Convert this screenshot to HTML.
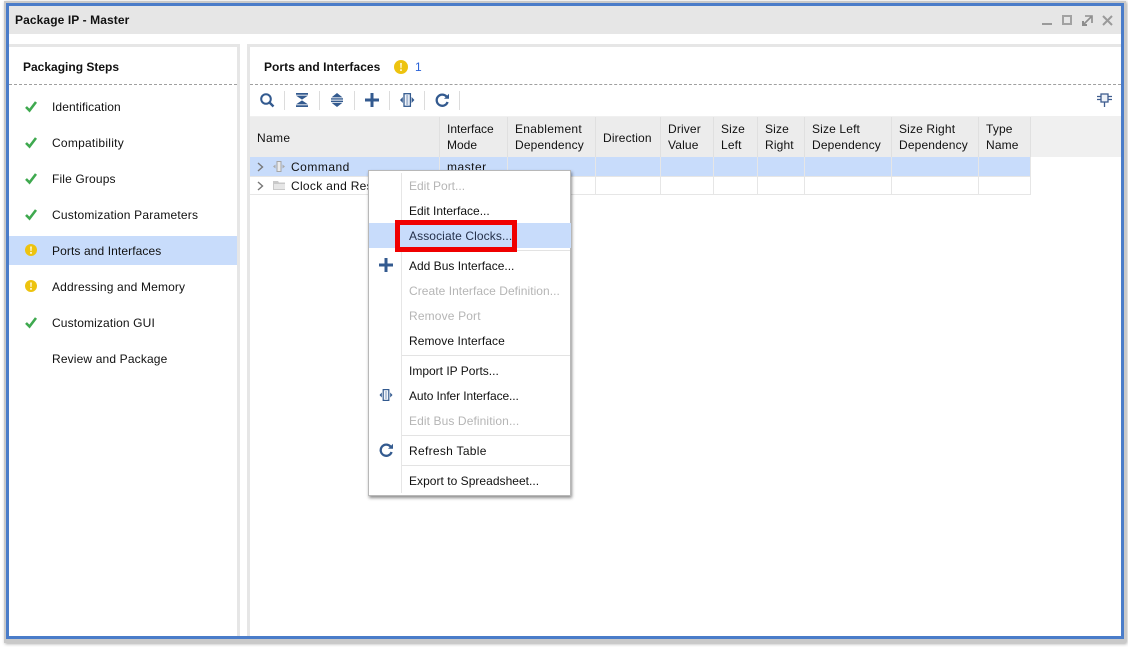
<!DOCTYPE html>
<html><head><meta charset="utf-8"><style>
html,body{margin:0;padding:0;background:#fff}
body{width:1128px;height:647px;position:relative;overflow:hidden;font:12px/16px "Liberation Sans",sans-serif;color:#111}
.a{position:absolute}
.t{position:absolute;white-space:nowrap;letter-spacing:.15px}
.b{font-weight:bold}
.d{color:#b5b5b5}
.m{letter-spacing:.03px}
svg{position:absolute;overflow:visible}
.h{position:absolute;top:117px;height:40px;background:#ececec;border-right:1px solid #e0e0e0;box-sizing:border-box}
.v{position:absolute;top:157px;height:38px;width:1px;background:#e6e6e6}
.s{position:absolute;left:402px;width:168px;height:1px;background:#e3e3e3}
.ts{position:absolute;top:91px;width:1px;height:19px;background:#dcdcdc}
</style></head><body>
<div class="a" style="left:4px;top:1px;width:1122px;height:642px;background:#c9c9c9;box-shadow:1px 1px 3px #aaa"></div>
<div class="a" style="left:6px;top:3px;width:1118px;height:636px;background:#4a7cc9"></div>
<div class="a" style="left:9px;top:6px;width:1112px;height:630px;background:#fff"></div>
<div class="a" style="left:9px;top:6px;width:1112px;height:28px;background:#e6e6e6"></div>
<div class="t b" style="left:15px;top:12px;letter-spacing:.1px">Package IP - Master</div>
<div class="a" style="left:1042px;top:23px;width:10px;height:2px;background:#9a9a9a"></div>
<div class="a" style="left:1062px;top:15px;width:10px;height:10px;border:2px solid #a2a2a2;box-sizing:border-box"></div>
<svg style="left:1082px;top:15px" width="11" height="11" fill="none" stroke="#8d8d8d" stroke-width="1.6"><path d="M3 1H10V8M9 2L1 10"/><path d="M1 6V10H5" stroke-width="2"/></svg>
<svg style="left:1102px;top:15px" width="11" height="11" fill="none" stroke="#9a9a9a" stroke-width="2"><path d="M1 1L10 10M10 1L1 10"/></svg>

<div class="a" style="left:9px;top:44px;width:1112px;height:3px;background:#e6e6e6"></div>
<div class="a" style="left:237px;top:44px;width:3px;height:592px;background:#e6e6e6"></div>
<div class="a" style="left:240px;top:44px;width:7px;height:592px;background:#fff"></div>
<div class="a" style="left:247px;top:44px;width:3px;height:592px;background:#e6e6e6"></div>

<div class="t b" style="left:23px;top:59px;letter-spacing:0">Packaging Steps</div>
<div class="a" style="left:9px;top:84px;width:228px;border-top:1px dashed #a0a0a0"></div>
<div class="a" style="left:250px;top:84px;width:871px;border-top:1px dashed #a0a0a0"></div>
<div class="a" style="left:9px;top:236px;width:228px;height:29px;background:#c8dcfb"></div>

<svg style="left:25px;top:101px" width="12" height="11" fill="none" stroke="#3fa94f" stroke-width="2.6"><path d="M1 6L4.5 9.5L11 1"/></svg>
<div class="t" style="left:52px;top:99px;letter-spacing:.1px">Identification</div>
<svg style="left:25px;top:137px" width="12" height="11" fill="none" stroke="#3fa94f" stroke-width="2.6"><path d="M1 6L4.5 9.5L11 1"/></svg>
<div class="t" style="left:52px;top:135px;letter-spacing:.25px">Compatibility</div>
<svg style="left:25px;top:173px" width="12" height="11" fill="none" stroke="#3fa94f" stroke-width="2.6"><path d="M1 6L4.5 9.5L11 1"/></svg>
<div class="t" style="left:52px;top:171px">File Groups</div>
<svg style="left:25px;top:209px" width="12" height="11" fill="none" stroke="#3fa94f" stroke-width="2.6"><path d="M1 6L4.5 9.5L11 1"/></svg>
<div class="t" style="left:52px;top:207px;letter-spacing:.2px">Customization Parameters</div>
<svg style="left:25px;top:244px" width="12" height="12"><circle cx="6" cy="6" r="6" fill="#edc30f"/><path d="M5 2.5H7L6.6 7H5.4ZM5 8H7V9.8H5Z" fill="#fff3c0"/></svg>
<div class="t" style="left:52px;top:243px;letter-spacing:.1px">Ports and Interfaces</div>
<svg style="left:25px;top:280px" width="12" height="12"><circle cx="6" cy="6" r="6" fill="#edc30f"/><path d="M5 2.5H7L6.6 7H5.4ZM5 8H7V9.8H5Z" fill="#fff3c0"/></svg>
<div class="t" style="left:52px;top:279px">Addressing and Memory</div>
<svg style="left:25px;top:317px" width="12" height="11" fill="none" stroke="#3fa94f" stroke-width="2.6"><path d="M1 6L4.5 9.5L11 1"/></svg>
<div class="t" style="left:52px;top:315px;letter-spacing:.13px">Customization GUI</div>
<div class="t" style="left:52px;top:351px">Review and Package</div>

<div class="t b" style="left:264px;top:59px;letter-spacing:.05px">Ports and Interfaces</div>
<svg style="left:394px;top:59.5px" width="14" height="14"><circle cx="7" cy="7" r="7" fill="#edc30f"/><path d="M6 3H8L7.6 8.2H6.4ZM6 9.2H8V11H6Z" fill="#fff3c0"/></svg>
<div class="t" style="left:415px;top:59px;color:#2a62d8">1</div>

<svg style="left:260px;top:93px" width="15" height="15" fill="none" stroke="#335a8f" stroke-width="2"><circle cx="6" cy="6" r="4.8"/><path d="M9.5 9.5L13.5 13.5" stroke-width="2.4"/></svg>
<div class="ts" style="left:284px"></div>
<svg style="left:296px;top:93px" width="12" height="14" fill="#335a8f"><path d="M0 0H12V1.8H0ZM0 2.6H12L6 6.6ZM6 7.4L12 11.4H0ZM0 12.2H12V14H0Z"/></svg>
<div class="ts" style="left:319px"></div>
<svg style="left:331px;top:93px" width="12" height="14" fill="#335a8f"><path d="M6 0L11.5 4.4H.5ZM0 5.2H12V6.6H0ZM0 7.6H12V9H0ZM.5 9.8H11.5L6 14Z"/></svg>
<div class="ts" style="left:354px"></div>
<svg style="left:365px;top:93px" width="14" height="14" fill="#335a8f"><path d="M5.5 0H8.5V5.5H14V8.5H8.5V14H5.5V8.5H0V5.5H5.5Z"/></svg>
<div class="ts" style="left:389px"></div>
<svg style="left:400px;top:93px" width="14" height="14"><rect x="4" y="0.7" width="6.4" height="12.6" fill="#f2f5fa" stroke="#335a8f" stroke-width="1.3"/><rect x="6.2" y="2" width="2" height="10" fill="#a9bad2"/><path d="M2.8 4L0 7L2.8 10ZM11.6 4L14.4 7L11.6 10Z" fill="#335a8f"/></svg>
<div class="ts" style="left:424px"></div>
<svg style="left:435px;top:93px" width="15" height="14" fill="none" stroke="#335a8f" stroke-width="2.3"><path d="M11.5 3.5A5.6 5.6 0 1 0 12.6 9"/><path d="M9 5.8H14V0.8Z" fill="#335a8f" stroke="none"/></svg>
<div class="ts" style="left:459px"></div>
<svg style="left:1097px;top:93px" width="15" height="14" fill="none" stroke="#3f5d8f" stroke-width="1.3"><rect x="4" y="1" width="7" height="8" fill="#eef2f8"/><path d="M0 3.5H4M0 6.5H4M11 3.5H15M11 6.5H15M7.5 9V14"/></svg>

<div class="a" style="left:250px;top:116px;width:871px;height:41px;background:#f0f0f0"></div>
<div class="h" style="left:250px;width:190px"></div>
<div class="h" style="left:440px;width:68px"></div>
<div class="h" style="left:508px;width:88px"></div>
<div class="h" style="left:596px;width:65px"></div>
<div class="h" style="left:661px;width:53px"></div>
<div class="h" style="left:714px;width:44px"></div>
<div class="h" style="left:758px;width:47px"></div>
<div class="h" style="left:805px;width:87px"></div>
<div class="h" style="left:892px;width:87px"></div>
<div class="h" style="left:979px;width:52px"></div>
<div class="t" style="left:257px;top:130px;letter-spacing:.35px">Name</div>
<div class="t" style="left:447px;top:121px;letter-spacing:0">Interface<br>Mode</div>
<div class="t" style="left:515px;top:121px"><span style="letter-spacing:.3px">Enablement</span><br>Dependency</div>
<div class="t" style="left:603px;top:130px">Direction</div>
<div class="t" style="left:668px;top:121px">Driver<br>Value</div>
<div class="t" style="left:721px;top:121px">Size<br>Left</div>
<div class="t" style="left:765px;top:121px">Size<br>Right</div>
<div class="t" style="left:812px;top:121px">Size Left<br>Dependency</div>
<div class="t" style="left:899px;top:121px">Size Right<br>Dependency</div>
<div class="t" style="left:986px;top:121px">Type<br>Name</div>

<div class="a" style="left:250px;top:157px;width:781px;height:19px;background:#c8dcfb"></div>
<div class="a" style="left:250px;top:176px;width:781px;height:1px;background:#e6e6e6"></div>
<div class="a" style="left:250px;top:194px;width:781px;height:1px;background:#e6e6e6"></div>
<div class="v" style="left:439px"></div><div class="v" style="left:507px"></div><div class="v" style="left:595px"></div><div class="v" style="left:660px"></div><div class="v" style="left:713px"></div><div class="v" style="left:757px"></div><div class="v" style="left:804px"></div><div class="v" style="left:891px"></div><div class="v" style="left:978px"></div><div class="v" style="left:1030px"></div>
<svg style="left:257px;top:162px" width="7" height="10" fill="none" stroke="#777" stroke-width="1.4"><path d="M1 1L5.5 5L1 9"/></svg>
<svg style="left:257px;top:181px" width="7" height="10" fill="none" stroke="#777" stroke-width="1.4"><path d="M1 1L5.5 5L1 9"/></svg>
<svg style="left:273px;top:161px" width="12" height="11"><rect x="4" y=".5" width="4" height="10" fill="#ececec" stroke="#a5a5a5"/><path d="M2.5 3.5L0 5.5L2.5 7.5ZM9.5 3.5L12 5.5L9.5 7.5Z" fill="#aaa"/></svg>
<svg style="left:273px;top:181px" width="12" height="9"><path d="M0 0H5L6 1.5H12V9H0Z" fill="#c9c9c9"/><path d="M1 3H12V8H1Z" fill="#e6e6e6"/></svg>
<div class="t" style="left:291px;top:159px;letter-spacing:.5px">Command</div>
<div class="t" style="left:291px;top:178px;letter-spacing:.3px">Clock and Reset</div>
<div class="t" style="left:447px;top:159px;letter-spacing:.5px">master</div>

<div class="a" style="left:368px;top:170px;width:203px;height:326px;background:#fff;border:1px solid #b8b8b8;box-sizing:border-box;box-shadow:1px 2px 3px rgba(0,0,0,.45)"></div>
<div class="a" style="left:401px;top:173px;width:1px;height:320px;background:#e6e6e6"></div>
<div class="a" style="left:369px;top:223px;width:202px;height:25px;background:#c8dcfb"></div>
<div class="s" style="top:250px"></div>
<div class="s" style="top:355px"></div>
<div class="s" style="top:435px"></div>
<div class="s" style="top:465px"></div>
<div class="a" style="left:395px;top:220px;width:122px;height:32px;border:5px solid #f00000;box-sizing:border-box"></div>
<div class="t d" style="left:409px;top:178px;letter-spacing:0">Edit Port...</div>
<div class="t" style="left:409px;top:203px;letter-spacing:0">Edit Interface...</div>
<div class="t" style="left:409px;top:228px;color:#25304a;letter-spacing:.1px">Associate Clocks...</div>
<div class="t" style="left:409px;top:258px;letter-spacing:0">Add Bus Interface...</div>
<div class="t d" style="left:409px;top:283px;letter-spacing:.05px">Create Interface Definition...</div>
<div class="t d" style="left:409px;top:308px">Remove Port</div>
<div class="t" style="left:409px;top:333px;letter-spacing:.07px">Remove Interface</div>
<div class="t" style="left:409px;top:363px;letter-spacing:0">Import IP Ports...</div>
<div class="t" style="left:409px;top:388px;letter-spacing:-.1px">Auto Infer Interface...</div>
<div class="t d" style="left:409px;top:413px;letter-spacing:.1px">Edit Bus Definition...</div>
<div class="t" style="left:409px;top:443px;letter-spacing:.3px">Refresh Table</div>
<div class="t" style="left:409px;top:473px;letter-spacing:.03px">Export to Spreadsheet...</div>
<svg style="left:379px;top:258px" width="14" height="14" fill="#335a8f"><path d="M5.5 0H8.5V5.5H14V8.5H8.5V14H5.5V8.5H0V5.5H5.5Z"/></svg>
<svg style="left:379px;top:389px" width="14" height="12"><rect x="4.2" y="0.6" width="5.6" height="10.8" fill="#f2f5fa" stroke="#335a8f" stroke-width="1.2"/><rect x="6.2" y="2" width="1.6" height="8" fill="#a9bad2"/><path d="M2.8 3.5L.5 6L2.8 8.5ZM11.2 3.5L13.5 6L11.2 8.5Z" fill="#335a8f"/></svg>
<svg style="left:379px;top:443px" width="15" height="14" fill="none" stroke="#335a8f" stroke-width="2.3"><path d="M11.5 3.5A5.6 5.6 0 1 0 12.6 9"/><path d="M9 5.8H14V0.8Z" fill="#335a8f" stroke="none"/></svg>
</body></html>
